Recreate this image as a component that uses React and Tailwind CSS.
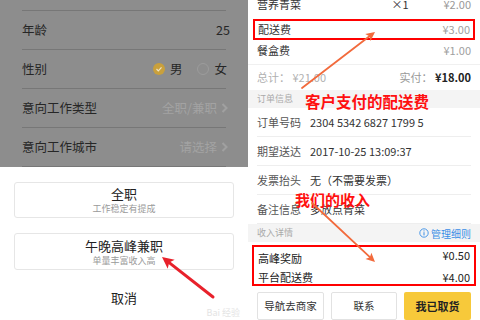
import React from 'react';

const font = { fontFamily: '"Noto Sans CJK SC", "Noto Sans", sans-serif' };

const ProfileRow = ({ label, children }) => (
  <div className="h-[39px] border-t border-[#777777] flex items-center justify-between text-[12.5px] text-[#262626]">
    <span>{label}</span>
    {children}
  </div>
);

const Chevron = () => (
  <svg width="7" height="10" viewBox="0 0 7 10" className="ml-[4px]">
    <path d="M1.5 1 L5.5 5 L1.5 9" fill="none" stroke="#a0a0a0" strokeWidth="2" />
  </svg>
);

const InfoRow = ({ label, value }) => (
  <div className="h-[29px] border-b border-[#eeeeee] flex items-center gap-[9px] text-[11px] text-[#333]">
    <span className="text-[#555]">{label}</span>
    <span>{value}</span>
  </div>
);

const Arrow = ({ x1, y1, x2, y2, color, width, head }) => {
  const a = Math.atan2(y2 - y1, x2 - x1);
  const p1 = [x2 - head * Math.cos(a - 0.45), y2 - head * Math.sin(a - 0.45)];
  const p2 = [x2 - head * Math.cos(a + 0.45), y2 - head * Math.sin(a + 0.45)];
  const bx = x2 - head * 0.7 * Math.cos(a);
  const by = y2 - head * 0.7 * Math.sin(a);
  return (
    <g>
      <line x1={x1} y1={y1} x2={bx} y2={by} stroke={color} strokeWidth={width} strokeLinecap="round" />
      <polygon points={`${x2},${y2} ${p1[0]},${p1[1]} ${bx},${by} ${p2[0]},${p2[1]}`} fill={color} />
    </g>
  );
};

const App = () => {
  return (
    <div className="w-[480px] h-[320px] relative overflow-hidden flex bg-white" style={font}>
      {/* left phone: job type picker */}
      <div className="w-[248px] h-full flex flex-col">
        <div className="h-[167px] bg-[#8d8d8d] pt-[10px] px-[22px] overflow-hidden">
          <ProfileRow label="年龄">
            <span className="mr-[-4px]">25</span>
          </ProfileRow>
          <ProfileRow label="性别">
            <div className="flex items-center mr-[-1px]">
              <span className="w-[12px] h-[12px] rounded-full bg-[#c9a03c] flex items-center justify-center">
                <svg width="8" height="8" viewBox="0 0 8 8">
                  <path d="M1.5 4 L3.3 5.8 L6.5 2.3" fill="none" stroke="#f0e4c4" strokeWidth="1.2" />
                </svg>
              </span>
              <span className="ml-[5px]">男</span>
              <span className="w-[12px] h-[12px] rounded-full border border-[#9c9c9c] ml-[15px]"></span>
              <span className="ml-[5px]">女</span>
            </div>
          </ProfileRow>
          <ProfileRow label="意向工作类型">
            <span className="flex items-center text-[#a3a3a3] mr-[-2px]">
              全职/兼职
              <Chevron />
            </span>
          </ProfileRow>
          <ProfileRow label="意向工作城市">
            <span className="flex items-center text-[#a3a3a3] mr-[-2px]">
              请选择
              <Chevron />
            </span>
          </ProfileRow>
          <div className="border-t border-[#777777]"></div>
        </div>

        <div className="flex-1 bg-white px-[14px] pt-[15px] flex flex-col relative">
          <div className="h-[36px] border border-[#e6e6e6] rounded-[3px] flex flex-col items-center justify-center">
            <span className="text-[13px] text-[#222] leading-[18px]">全职</span>
            <span className="text-[9px] text-[#9a9a9a] leading-[12px]">工作稳定有提成</span>
          </div>
          <div className="h-[37px] mt-[15px] border border-[#e6e6e6] rounded-[3px] flex flex-col items-center justify-center">
            <span className="text-[13px] text-[#222] leading-[18px]">午晚高峰兼职</span>
            <span className="text-[9px] text-[#9a9a9a] leading-[12px]">单量丰富收入高</span>
          </div>
          <div className="mt-[18px] text-center text-[13px] text-[#222]">取消</div>
          <span className="absolute right-[8px] bottom-[1px] text-[9px] text-[#e4e4e4]">Bai 经验</span>
        </div>
      </div>

      {/* right phone: order detail */}
      <div className="w-[232px] h-full flex flex-col bg-white text-[11px]">
        <div className="h-[20px] mt-[-5px] px-[9px] flex items-center text-[#333]">
          <span className="flex-1">营养青菜</span>
          <span className="w-[52px]">×1</span>
          <span className="text-[#999]">¥2.00</span>
        </div>
        <div className="h-[23px] mt-[5px] mx-[5px] border-2 border-[#ff0000] px-[3px] flex items-center justify-between">
          <span className="text-[#333]">配送费</span>
          <span className="text-[#a0a0a0]">¥3.00</span>
        </div>
        <div className="h-[20px] px-[9px] flex items-center justify-between">
          <span className="text-[#333]">餐盒费</span>
          <span className="text-[#a0a0a0]">¥1.00</span>
        </div>
        <div className="h-[27px] mt-[5px] px-[9px] border-t border-[#f0f0f0] flex items-center justify-between">
          <span className="text-[#b0b0b0]">总计： ¥21.00</span>
          <span className="text-[#999]">
            实付： <span className="font-bold text-[#222]">¥18.00</span>
          </span>
        </div>
        <div className="h-[20px] bg-[#f4f4f4] px-[9px] flex items-center text-[9px] text-[#aaa]">订单信息</div>
        <div className="px-[9px]">
          <InfoRow label="订单号码" value="2304 5342 6827 1799 5" />
          <InfoRow label="期望送达" value="2017-10-25 13:09:37" />
          <InfoRow label="发票抬头" value="无（不需要发票）" />
          <InfoRow label="备注信息" value="多放点青菜" />
        </div>
        <div className="h-[19px] bg-[#f4f4f4] px-[9px] flex items-center justify-between text-[9px]">
          <span className="text-[#aaa]">收入详情</span>
          <span className="flex items-center text-[#3a8ee6] text-[10px]">
            <svg width="10" height="10" viewBox="0 0 10 10" className="mr-[2px]">
              <circle cx="5" cy="5" r="4.2" fill="none" stroke="#3a8ee6" strokeWidth="0.9" />
              <rect x="4.5" y="4.2" width="1" height="3.2" fill="#3a8ee6" />
              <rect x="4.5" y="2.4" width="1" height="1" fill="#3a8ee6" />
            </svg>
            管理细则
          </span>
        </div>
        <div className="h-[41px] mt-[3px] mx-[4px] border-2 border-[#ff0000] px-[4px] flex flex-col justify-center text-[11px] text-[#222]">
          <div className="flex justify-between leading-[20px]">
            <span className="pt-[3px]">高峰奖励</span>
            <span>¥0.50</span>
          </div>
          <div className="flex justify-between leading-[18px]">
            <span>平台配送费</span>
            <span>¥4.00</span>
          </div>
        </div>
        <div className="flex gap-[7px] px-[9px] mt-[6px]">
          <div className="w-[67px] h-[28px] border border-[#e2e2e2] rounded-[2px] flex items-center justify-center text-[10.5px] text-[#333]">导航去商家</div>
          <div className="w-[66px] h-[28px] border border-[#e2e2e2] rounded-[2px] flex items-center justify-center text-[10.5px] text-[#333]">联系</div>
          <div className="w-[67px] h-[28px] bg-[#f7c93a] rounded-[2px] flex items-center justify-center text-[11px] font-bold text-[#222]">我已取货</div>
        </div>
      </div>

      {/* annotations */}
      <span className="absolute left-[305px] top-[90px] text-[15.5px] leading-[22px] font-bold text-[#ff1010]">客户支付的配送费</span>
      <span className="absolute left-[295px] top-[189px] text-[15px] leading-[22px] font-bold text-[#ff1010]">我们的收入</span>
      <svg className="absolute inset-0 pointer-events-none" width="480" height="320">
        <Arrow x1={213} y1={297} x2={162} y2={257} color="#e8212b" width={3} head={13} />
        <Arrow x1={302} y1={88} x2={375} y2={32} color="#f26a3c" width={1.8} head={10} />
        <Arrow x1={312} y1={203} x2={375} y2={262} color="#f26a3c" width={1.8} head={10} />
      </svg>
    </div>
  );
};

export default App;
